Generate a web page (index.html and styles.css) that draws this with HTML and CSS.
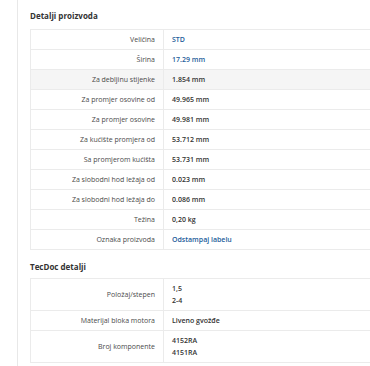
FILE: index.html
```html
<!DOCTYPE html>
<html>
<head>
<meta charset="utf-8">
<link rel="stylesheet" href="styles.css">
</head>
<body>
<div class="page">
  <div class="panel">
    <h3 class="section-title">Detalji proizvoda</h3>
    <table class="specs">
      <tr><td class="lbl">Veličina</td><td class="val link">STD</td></tr>
      <tr><td class="lbl">Širina</td><td class="val link">17.29 mm</td></tr>
      <tr class="hl"><td class="lbl">Za debljinu stijenke</td><td class="val">1.854 mm</td></tr>
      <tr><td class="lbl">Za promjer osovine od</td><td class="val">49.965 mm</td></tr>
      <tr><td class="lbl">Za promjer osovine</td><td class="val">49.981 mm</td></tr>
      <tr><td class="lbl">Za kućište promjera od</td><td class="val">53.712 mm</td></tr>
      <tr><td class="lbl">Sa promjerom kućišta</td><td class="val">53.731 mm</td></tr>
      <tr><td class="lbl">Za slobodni hod ležaja od</td><td class="val">0.023 mm</td></tr>
      <tr><td class="lbl">Za slobodni hod ležaja do</td><td class="val">0.086 mm</td></tr>
      <tr><td class="lbl">Težina</td><td class="val">0,20 kg</td></tr>
      <tr><td class="lbl">Oznaka proizvoda</td><td class="val link">Odstampaj labelu</td></tr>
    </table>
    <h3 class="section-title second">TecDoc detalji</h3>
    <table class="specs">
      <tr class="multi"><td class="lbl">Položaj/stepen</td><td class="val">1,5<br>2-4</td></tr>
      <tr><td class="lbl">Materijal bloka motora</td><td class="val">Liveno gvožđe</td></tr>
      <tr class="multi"><td class="lbl">Broj komponente</td><td class="val">4152RA<br>4151RA</td></tr>
    </table>
  </div>
</div>
</body>
</html>
```

FILE: styles.css
```css
html, body {
  margin: 0;
  padding: 0;
  background: #ffffff;
  overflow: hidden;
}
body {
  font-family: "Open Sans", "Noto Sans", sans-serif;
  color: #444;
}
.page {
  padding-left: 17px;
  height: 366px;
  width: 370px;
  box-sizing: border-box;
  overflow: hidden;
}
.panel {
  border-left: 1px solid #e8e8e8;
  padding-left: 12px;
  height: 100%;
  width: 420px;
}
.section-title {
  margin: 0;
  padding-top: 10px;
  height: 29px;
  box-sizing: border-box;
  font-size: 8px;
  font-weight: 700;
  color: #333;
  line-height: 12px;
}
.section-title.second {
  padding-top: 11px;
  height: 28px;
}
.specs {
  border-collapse: collapse;
  width: 100%;
  font-size: 7px;
}
.specs td {
  border: 1px solid #ebebeb;
  height: 20px;
  padding: 0 8px;
  box-sizing: border-box;
  line-height: 12px;
  vertical-align: middle;
}
.specs .lbl {
  width: 133px;
  text-align: right;
  color: #4a4a4a;
}
.specs .val {
  font-weight: 600;
  color: #333;
}
.specs .val.link {
  color: #1d5c9a;
}
.specs tr.hl td {
  background: #f5f5f5;
}
.specs tr.multi td {
  height: 32px;
}
```
